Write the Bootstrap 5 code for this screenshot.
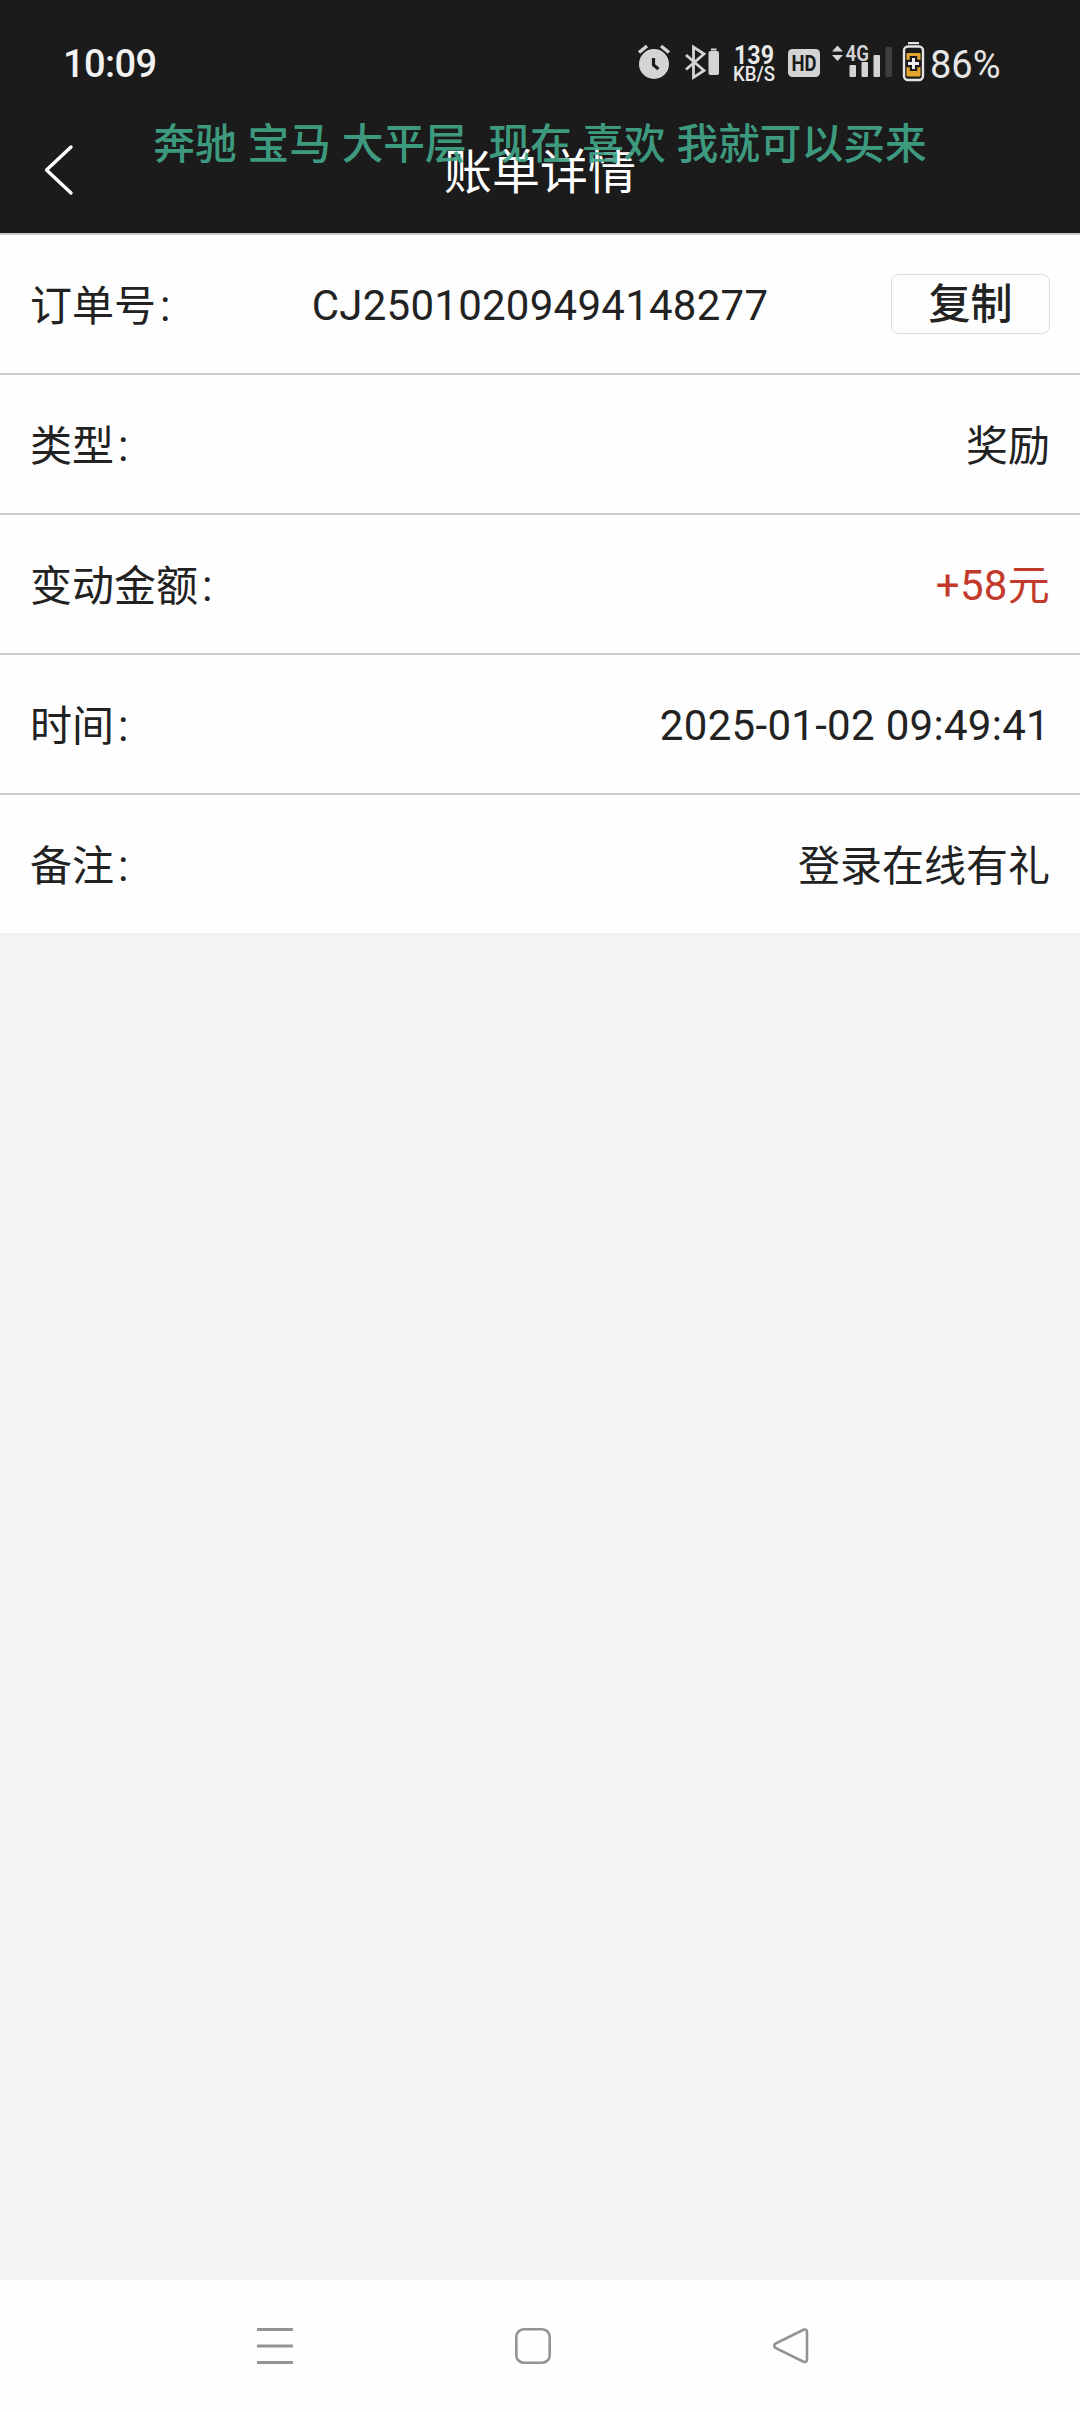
<!DOCTYPE html>
<html lang="zh-CN">
<head>
<meta charset="utf-8">
<meta name="viewport" content="width=device-width, initial-scale=1">
<title>账单详情</title>
<link rel="stylesheet" href="https://cdn.jsdelivr.net/npm/bootstrap@5.3.0/dist/css/bootstrap.min.css">
<style>
body{font-family:Roboto,"Noto Sans CJK SC",sans-serif;font-size:42px;line-height:1.4;color:#222;background:#f3f3f3}
.topbar{background:#1b1b1b}
.status{height:108px;padding:20px 0 0 63px;line-height:48px;color:#e6e6e6}
.clock{font-size:38px;font-weight:500;width:567px;letter-spacing:-.6px;color:#f2f2f2}
.power{font-size:38px;letter-spacing:0;padding-top:2px}
.titlebar{height:125px;padding:0 40px}
.titlebar svg{margin-bottom:2px}
.titlebar h1{font-size:48px;line-height:64px;font-weight:400;margin-right:40px;padding-top:4px}
.ticker{top:115px;font-size:41.7px;line-height:60px;font-weight:500;color:#41a588;opacity:.92;word-spacing:.4px;white-space:pre}
.bill{border-top:2px solid #ccc;background:#fefefe}
.bill .bill-row{height:140px;padding:0 30px;border:0;border-bottom:2px solid #ccc;background:#fefefe;color:#222}
.bill .bill-row:last-child{height:138px;border:0}
.bill-row span{padding-top:6px}
.bill-row .num,.bill-row .order-no{padding-top:5px}
.bill-row i{font-style:normal;font-size:37px;font-weight:300}
.num{letter-spacing:.3px}
.order-no{letter-spacing:.25px;margin-right:4px}
.copy{width:159px;height:60px;font-size:42px;line-height:60px;margin-bottom:1px;font-weight:500;border:1px solid #ddd;border-radius:8px;color:#222}
.amount{color:#c23a2b}
.sysnav{height:132px;background:#fefefe;padding-right:14px;gap:222px}
</style>
<script src="https://cdn.jsdelivr.net/npm/bootstrap@5.3.0/dist/js/bootstrap.bundle.min.js"></script>
</head>
<body class="min-vh-100 d-flex flex-column">
<header class="topbar position-relative text-white">
  <div class="status d-flex align-items-center">
    <span class="clock">10:09</span>
    <svg width="50" height="48" viewBox="630 40 50 48"><circle cx="654" cy="64" r="15" fill="#d4d4d4"/><path d="M639 52.500l8-6.500M669 52.500l-8-6.500" stroke="#d4d4d4" stroke-width="3.500"/><path d="M653.500 58v7l5 4" fill="none" stroke="#1b1b1b" stroke-width="3.200"/></svg>
    <svg width="45" height="48" viewBox="680 40 45 48"><path d="M686 55l18 15.500-10.500 7V47l10.500 7-18 15.500" fill="none" stroke="#d4d4d4" stroke-width="2.800"/><rect x="708.500" y="51" width="10.500" height="24" rx="2" fill="#d4d4d4"/><rect x="711" y="48.500" width="5.500" height="2" fill="#d4d4d4"/></svg>
    <svg width="55" height="48" viewBox="725 40 55 48" fill="#e8e8e8" font-family="Roboto, sans-serif"><text x="734" y="63.500" font-size="25" font-weight="700" textLength="40" lengthAdjust="spacingAndGlyphs">139</text><text x="733" y="80.500" font-size="19.500" font-weight="500" textLength="42" lengthAdjust="spacingAndGlyphs">KB/S</text></svg>
    <svg width="48" height="48" viewBox="780 40 48 48"><rect x="788" y="49" width="32" height="28" rx="4.500" fill="#d4d4d4"/><text x="791.500" y="71" font-family="Roboto, sans-serif" font-weight="700" font-size="22" fill="#1b1b1b" textLength="25" lengthAdjust="spacingAndGlyphs">HD</text></svg>
    <svg width="70" height="48" viewBox="828 40 70 48" fill="#d4d4d4"><path d="M832 51.500h11l-5.500-6zM832 55h11l-5.500 6z"/><text x="845.500" y="60.500" font-family="Roboto, sans-serif" font-weight="600" font-size="21.500" textLength="23.500" lengthAdjust="spacingAndGlyphs">4G</text><rect x="849.500" y="65" width="6.500" height="12" rx="1"/><rect x="861.500" y="62" width="6.500" height="15" rx="1"/><rect x="873.500" y="55" width="6.500" height="22" rx="1"/><rect x="885.500" y="47" width="6.500" height="30" rx="1" fill="#3e3e3e"/></svg>
    <svg width="32" height="48" viewBox="898 40 32 48"><rect x="908" y="42" width="11" height="2.200" fill="#e4e4e4"/><rect x="904" y="46.500" width="19" height="33.500" rx="4" fill="none" stroke="#e4e4e4" stroke-width="2.400"/><rect x="906.500" y="53" width="14" height="23.500" rx="1" fill="#e3a52f"/><path d="M913.500 56v15M906 63.500h15" stroke="#1b1b1b" stroke-width="7.500"/><path d="M913.500 58v11M908 63.500h11" stroke="#eee" stroke-width="3"/></svg>
    <span class="power">86%</span>
  </div>
  <div class="titlebar d-flex align-items-center">
    <svg width="40" height="54" viewBox="0 0 40 54"><path d="M31 4L6.500 27 31 50" fill="none" stroke="#fff" stroke-width="3.400" stroke-linecap="round" stroke-linejoin="round"/></svg>
    <h1 class="flex-grow-1 text-center mb-0">账单详情</h1>
  </div>
  <div class="ticker position-absolute start-0 end-0 text-center">奔驰 宝马 大平层  现在 喜欢 我就可以买来</div>
</header>
<main class="flex-grow-1">
  <div class="bill list-group list-group-flush">
    <div class="bill-row list-group-item d-flex align-items-center justify-content-between"><span>订单号<i>：</i></span><span class="order-no">CJ25010209494148277</span><button class="copy btn p-0">复制</button></div>
    <div class="bill-row list-group-item d-flex align-items-center justify-content-between"><span>类型<i>：</i></span><span>奖励</span></div>
    <div class="bill-row list-group-item d-flex align-items-center justify-content-between"><span>变动金额<i>：</i></span><span class="amount num">+58元</span></div>
    <div class="bill-row list-group-item d-flex align-items-center justify-content-between"><span>时间<i>：</i></span><span class="num">2025-01-02 09:49:41</span></div>
    <div class="bill-row list-group-item d-flex align-items-center justify-content-between"><span>备注<i>：</i></span><span>登录在线有礼</span></div>
  </div>
</main>
<footer class="sysnav d-flex align-items-center justify-content-center">
  <svg width="36" height="36" fill="none" stroke="#939393" stroke-width="3"><path d="M0 1.500h36M0 18h36M0 34.500h36"/></svg>
  <svg width="36" height="36" fill="none" stroke="#939393" stroke-width="2.600"><rect x="1.300" y="1.300" width="33.400" height="33.400" rx="7.500"/></svg>
  <svg width="36" height="36" fill="none" stroke="#939393" stroke-width="2.600"><path d="M30.500 1.800Q34 .5 34 4.500V31Q34 35 30.500 33.700L2.500 20Q0 18 2.500 15.500Z"/></svg>
</footer>
</body>
</html>
